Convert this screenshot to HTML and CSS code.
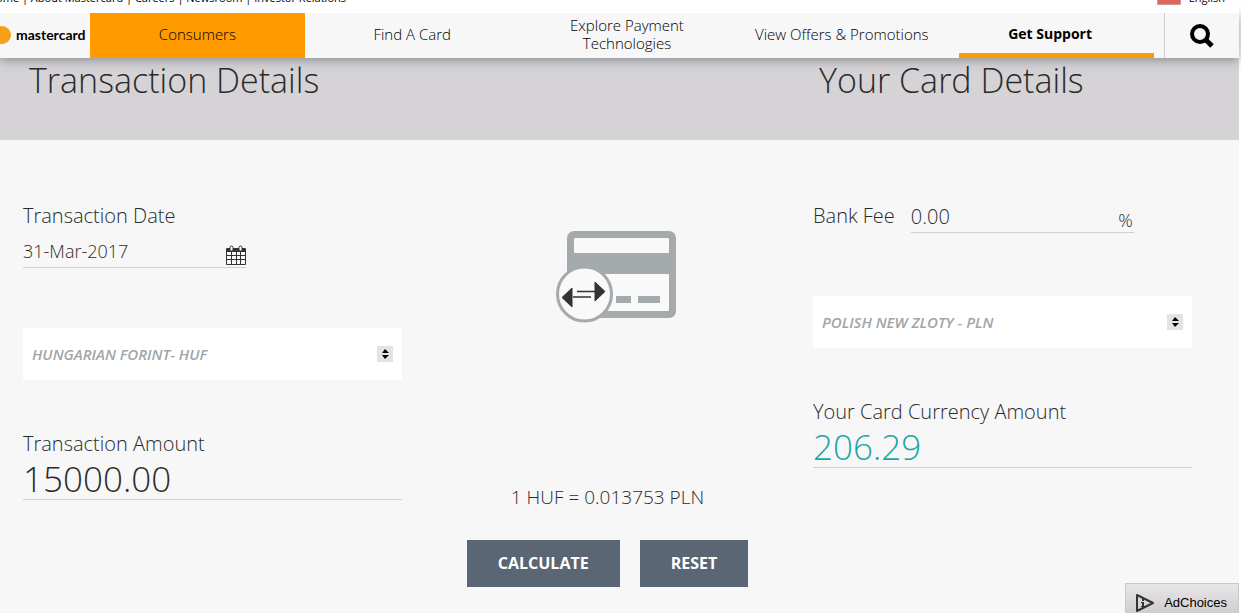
FILE: index.html
```html
<!DOCTYPE html>
<html lang="en">
<head>
    <meta charset="UTF-8">
    <meta name="viewport" content="width=device-width, initial-scale=1.0">
    <title>Currency Converter</title>
    <link rel="stylesheet" href="styles.css">
</head>
<body>
    <!-- Utility links -->
    <div class="topbar">
        <div class="topbar-links">
            <a href="#">Home</a> | <a href="#">About Mastercard</a> | <a href="#">Careers</a> | <a href="#">Newsroom</a> | <a href="#">Investor Relations</a>
        </div>
        <a href="#" class="language"><span class="flag"></span>English</a>
    </div>

    <header class="navbar">
        <a href="#" class="brand">
            <svg width="12" height="20" viewBox="0 0 12 20" aria-hidden="true"><circle cx="2" cy="10" r="9" fill="#f79e1b"/></svg>
            <span>mastercard</span>
        </a>
        <nav class="menu">
            <a href="#" class="menu-item current">Consumers</a>
            <a href="#" class="menu-item">Find A Card</a>
            <a href="#" class="menu-item">Explore Payment Technologies</a>
            <a href="#" class="menu-item">View Offers &amp; Promotions</a>
            <a href="#" class="menu-item active">Get Support</a>
        </nav>
        <button type="button" class="search" aria-label="Search">
            <svg width="24" height="24" viewBox="0 0 24 24" fill="none" stroke="#000">
                <circle cx="10" cy="10" r="8" stroke-width="4"/>
                <path d="M15 15l2 2" stroke-width="4"/>
                <path d="M16 16l6 6" stroke-width="5"/>
            </svg>
        </button>
    </header>

    <div class="banner columns">
        <h2>Transaction Details</h2>
        <h2 class="banner-right">Your Card Details</h2>
    </div>

    <main>
        <form class="columns" onsubmit="event.preventDefault();">
            <!-- Transaction -->
            <section class="column">
                <div class="date-group">
                    <label for="transactionDate">Transaction Date</label>
                    <div class="line-field">
                        <input type="text" id="transactionDate" value="31-Mar-2017">
                        <svg width="20" height="22" viewBox="0 0 20 22" aria-hidden="true">
                            <rect x="0" y="3" width="20" height="17" rx="1" fill="#333"/>
                            <path fill="#f7f7f7" d="M1 7h4v3H1zM6 7h4v3H6zM11 7h3v3h-3zM15 7h4v3h-4zM1 11h4v3H1zM6 11h4v3H6zM11 11h3v3h-3zM15 11h4v3h-4zM1 15h4v4H1zM6 15h4v4H6zM11 15h3v4h-3zM15 15h4v4h-4z"/>
                            <rect x="4" y="1" width="3" height="5" rx="1.5" fill="#f7f7f7" stroke="#333"/>
                            <rect x="13" y="1" width="3" height="5" rx="1.5" fill="#f7f7f7" stroke="#333"/>
                        </svg>
                    </div>
                </div>
                <div class="select-box">
                    <select aria-label="Transaction currency">
                        <option>HUNGARIAN FORINT- HUF</option>
                    </select>
                    <svg width="16" height="16" viewBox="0 0 16 16" aria-hidden="true"><path fill="#e4e2e4" d="M0 0h16v16H0z"/><path d="M5 7l3-4 4 4zM5 9h7l-4 4z"/></svg>
                </div>
                <div class="amount-group">
                    <label for="transactionAmount">Transaction Amount</label>
                    <input type="text" id="transactionAmount" class="amount" value="15000.00">
                </div>
            </section>

            <!-- Rate and actions -->
            <section class="column middle">
                <svg class="card-icon" width="120" height="92" viewBox="0 0 120 92" aria-hidden="true">
                    <rect x="11" y="0" width="109" height="87" rx="7" fill="#a5aaac"/>
                    <rect x="18" y="7" width="95" height="15" rx="1" fill="#f9f9f9"/>
                    <rect x="18" y="43" width="95" height="37" rx="1" fill="#f9f9f9"/>
                    <path fill="#a5aaac" d="M60 65h15v7H60zM82 65h22v7H82z"/>
                    <circle cx="28.500" cy="63" r="27" fill="#f9f9f9" stroke="#a5aaac" stroke-width="3"/>
                    <path d="M21 60.500h18M17 66h18" stroke="#333" stroke-width="1.500"/>
                    <path fill="#333" stroke="#333" stroke-linejoin="round" d="M39 51v19l10-9.500zM16 57v19L6 66.500z"/>
                </svg>
                <p class="rate">1 HUF = 0.013753 PLN</p>
                <div class="buttons">
                    <button type="submit" class="btn">CALCULATE</button>
                    <button type="button" class="btn">RESET</button>
                </div>
            </section>

            <!-- Card -->
            <section class="column">
                <div class="fee-group">
                    <label for="bankFee">Bank Fee</label>
                    <div class="line-field">
                        <input type="text" id="bankFee" class="fee" value="0.00">
                        <span class="percent">%</span>
                    </div>
                </div>
                <div class="select-box">
                    <select aria-label="Card currency">
                        <option>POLISH NEW ZLOTY - PLN</option>
                    </select>
                    <svg width="16" height="16" viewBox="0 0 16 16" aria-hidden="true"><path fill="#e4e2e4" d="M0 0h16v16H0z"/><path d="M5 7l3-4 4 4zM5 9h7l-4 4z"/></svg>
                </div>
                <div class="amount-group">
                    <label for="cardAmount">Your Card Currency Amount</label>
                    <input type="text" id="cardAmount" class="amount result" value="206.29" readonly>
                </div>
            </section>
        </form>
    </main>

    <a href="#" class="adchoices">
        <svg width="20" height="20" viewBox="0 0 20 20" aria-hidden="true">
            <path d="M2 2v16l16-8z" fill="none" stroke="#333" stroke-width="2" stroke-linejoin="round"/>
            <path d="M7 6h2v2H7zM6 9h3v4h1v1H6v-1h1v-3H6z" fill="#333"/>
        </svg>
        <span>AdChoices</span>
    </a>
</body>
</html>
```
FILE: styles.css
```css
* { box-sizing: border-box; }
body {
    display: flex;
    flex-direction: column;
    min-height: 100vh;
    margin: 0;
    padding-right: 2px;
    background-color: #fffdf8;
    font-family: "Open Sans", Arial, sans-serif;
    font-weight: 300;
    color: #2b2b2b;
}
a { color: #000; text-decoration: none; }
input, select, button { font-family: inherit; }

/* Top links */
.topbar {
    position: relative;
    z-index: 1;
    display: flex;
    justify-content: space-between;
    align-items: flex-end;
    height: 13px;
    padding: 0 14px 7px 0;
    overflow: hidden;
    background-color: #fff;
    font-size: 11px;
    font-weight: 400;
    line-height: 16px;
    color: #000;
}
.topbar-links { margin-left: -12px; white-space: nowrap; }
.language { display: flex; align-items: flex-end; gap: 8px; }
.flag {
    width: 24px;
    height: 16px;
    margin-bottom: 1px;
    background: linear-gradient(#fff 50%, #e2645c 50%);
    border: 1px solid #c99;
}

/* Navigation */
.navbar {
    position: relative;
    display: flex;
    height: 45px;
    background-color: #f7f7f7;
    box-shadow: 0 2px 10px rgba(80, 90, 100, .6);
}
.brand {
    display: flex;
    align-items: center;
    gap: 4px;
    width: 90px;
    padding-bottom: 2px;
    font-family: Lato, sans-serif;
    font-size: 14px;
    font-weight: 700;
}
.menu { display: flex; flex: 1; }
.menu-item {
    position: relative;
    display: flex;
    width: 20%;
    align-items: center;
    justify-content: center;
    padding: 0 12px 4px;
    font-size: 15px;
    line-height: 18px;
    text-align: center;
}
.current { background-color: #ff9a00; }
.active {
    padding-right: 25px;
    font-size: 14px;
    font-weight: 700;
}
.active::after {
    content: "";
    position: absolute;
    right: 10px;
    bottom: 0;
    left: 10px;
    height: 5px;
    background-color: #ff9a00;
}
.search {
    width: 75px;
    padding: 4px 0 0;
    background: none;
    border: 0;
    border-left: 1px solid #ccc;
    cursor: pointer;
}

/* Page grid */
.columns {
    display: grid;
    grid-template-columns: repeat(3, 1fr);
    column-gap: 16px;
    padding: 0 47px 0 23px;
}
.banner { height: 82px; background-color: #d5d3d6; }
.banner h2 {
    margin: 0;
    padding-left: 6px;
    font-size: 34px;
    font-weight: 300;
    line-height: 44px;
    white-space: nowrap;
}
.banner-right { grid-column: 3; }
main { flex: 1; background-color: #f7f7f7; }
.column { padding-top: 62px; }
label, .rate { font-size: 20px; line-height: 28px; white-space: nowrap; }
label { display: block; }

/* Fields */
.line-field {
    display: flex;
    align-items: flex-end;
    width: 223px;
    border-bottom: 1px solid #d0d3d4;
}
.line-field input {
    flex: 1;
    min-width: 0;
    height: 32px;
    padding: 0;
    background: none;
    border: 0;
    font-size: 18px;
    font-weight: 300;
    color: inherit;
}
.line-field .fee { font-size: 20px; }
.date-group { height: 126px; }
.date-group .line-field { height: 38px; }
.fee-group { display: flex; gap: 16px; height: 94px; }
.fee-group .line-field { height: 31px; }
.percent { padding-right: 1px; font-size: 18px; line-height: 24px; }
.select-box { position: relative; margin-bottom: 50px; }
.select-box select {
    display: block;
    width: 100%;
    height: 52px;
    padding: 0 40px 0 9px;
    appearance: none;
    background-color: #fff;
    border: 0;
    border-radius: 0;
    font-size: 15px;
    font-style: italic;
    font-weight: 600;
    color: #a0a6a8;
}
.select-box svg {
    position: absolute;
    top: 18px;
    right: 9px;
    pointer-events: none;
}
.amount {
    display: block;
    width: 100%;
    height: 42px;
    padding: 0;
    background: none;
    border: 0;
    border-bottom: 1px solid #d0d3d4;
    font-size: 35px;
    font-weight: 300;
    color: #2b2b2b;
}
.result { color: #1aa5a8; }

/* Middle column */
.middle {
    display: flex;
    flex-direction: column;
    align-items: center;
    padding-top: 91px;
}
.card-icon { margin-right: -16px; }
.rate { margin: 160px 0 29px; font-size: 19px; }
.buttons { display: flex; gap: 20px; }
.btn {
    height: 47px;
    padding: 0 31px 2px;
    background-color: #5a6673;
    border: 0;
    font-size: 16px;
    font-weight: 700;
    color: #fff;
    cursor: pointer;
}

.adchoices {
    position: fixed;
    right: 2px;
    bottom: 0;
    display: flex;
    align-items: center;
    gap: 9px;
    height: 30px;
    padding: 8px 11px 0 9px;
    background: linear-gradient(#e8e6e9, #cfcdd0);
    border: 1px solid #c8c8c8;
    border-bottom: 0;
    font-family: "Liberation Sans", Arial, sans-serif;
    font-size: 13px;
    font-weight: 400;
}
```
